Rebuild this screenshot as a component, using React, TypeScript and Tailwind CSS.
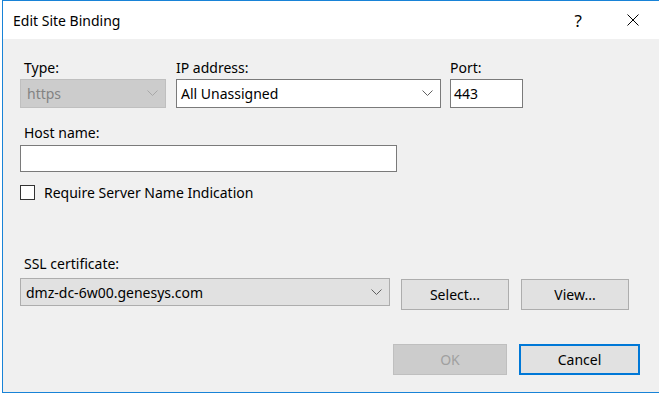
import React from 'react';

const font = { fontFamily: '"Noto Sans", "Open Sans", sans-serif' };

const Chevron = ({ color = '#606060' }: { color?: string }) => (
  <svg width="11" height="7" viewBox="0 0 11 7" className="shrink-0">
    <polyline points="0.5,0.5 5.5,5.5 10.5,0.5" fill="none" stroke={color} strokeWidth="1" />
  </svg>
);

const App: React.FC = () => {
  return (
    <div className="w-[659px] h-[396px] bg-white flex text-[14px] text-black" style={font}>
      <div className="ml-[2px] flex-1 h-[393px] flex flex-col border-l border-t border-b border-[#1883d7]">
        {/* Title bar */}
        <div className="h-[38px] bg-white flex items-center">
          <span className="pl-[10px] text-[14px]">Edit Site Binding</span>
          <span className="ml-auto mr-[45px] text-[17px] leading-none">?</span>
          <svg width="12" height="12" viewBox="0 0 12 12" className="mr-[20px]">
            <path d="M0.5 0.5 L11.5 11.5 M11.5 0.5 L0.5 11.5" stroke="#000" strokeWidth="1" />
          </svg>
        </div>

        {/* Body */}
        <div className="flex-1 bg-[#f0f0f0] pl-[17px] pt-[20px]">
          {/* Row 1 */}
          <div className="flex">
            <div className="w-[146px]">
              <div className="h-[18px] leading-[18px] pl-[4px]">Type:</div>
              <div className="mt-[2px] h-[29px] bg-[#cccccc] border border-[#bfbfbf] flex items-center pl-[6px] pr-[7px]">
                <span className="flex-1 text-[#838383]">https</span>
                <Chevron color="#a8a8a8" />
              </div>
            </div>
            <div className="w-[265px] ml-[10px]">
              <div className="h-[18px] leading-[18px]">IP address:</div>
              <div className="mt-[2px] h-[29px] bg-white border border-[#7a7a7a] flex items-center pl-[4px] pr-[7px]">
                <span className="flex-1">All Unassigned</span>
                <Chevron />
              </div>
            </div>
            <div className="w-[73px] ml-[9px]">
              <div className="h-[18px] leading-[18px]">Port:</div>
              <div className="mt-[2px] h-[29px] bg-white border border-[#7a7a7a] flex items-center pl-[3px]">443</div>
            </div>
          </div>

          {/* Host name */}
          <div className="mt-[16px] h-[18px] leading-[18px] pl-[4px]">Host name:</div>
          <div className="mt-[3px] w-[377px] h-[27px] bg-white border border-[#7a7a7a]" />

          {/* SNI checkbox */}
          <div className="mt-[13px] flex items-center h-[15px]">
            <div className="w-[15px] h-[15px] bg-white border border-[#333333]" />
            <span className="ml-[9px] leading-[15px]">Require Server Name Indication</span>
          </div>

          {/* SSL certificate */}
          <div className="mt-[55px] h-[18px] leading-[18px] pl-[4px]">SSL certificate:</div>
          <div className="mt-[5px] flex items-start">
            <div className="w-[370px] h-[28px] bg-[#e1e1e1] border border-[#adadad] flex items-center pl-[5px] pr-[7px]">
              <span className="flex-1">dmz-dc-6w00.genesys.com</span>
              <Chevron />
            </div>
            <button className="ml-[11px] mt-[1px] w-[108px] h-[31px] bg-[#e1e1e1] border border-[#adadad] flex items-center justify-center">
              Select...
            </button>
            <button className="ml-[12px] mt-[1px] w-[108px] h-[31px] bg-[#e1e1e1] border border-[#adadad] flex items-center justify-center">
              View...
            </button>
          </div>

          {/* OK / Cancel */}
          <div className="mt-[34px] flex">
            <button className="ml-[373px] w-[114px] h-[31px] bg-[#cccccc] border border-[#bfbfbf] text-[#a0a0a0] flex items-center justify-center">
              OK
            </button>
            <button className="ml-[12px] w-[121px] h-[31px] bg-[#e1e1e1] border-2 border-[#0078d7] flex items-center justify-center">
              Cancel
            </button>
          </div>
        </div>
      </div>
    </div>
  );
};

export default App;
